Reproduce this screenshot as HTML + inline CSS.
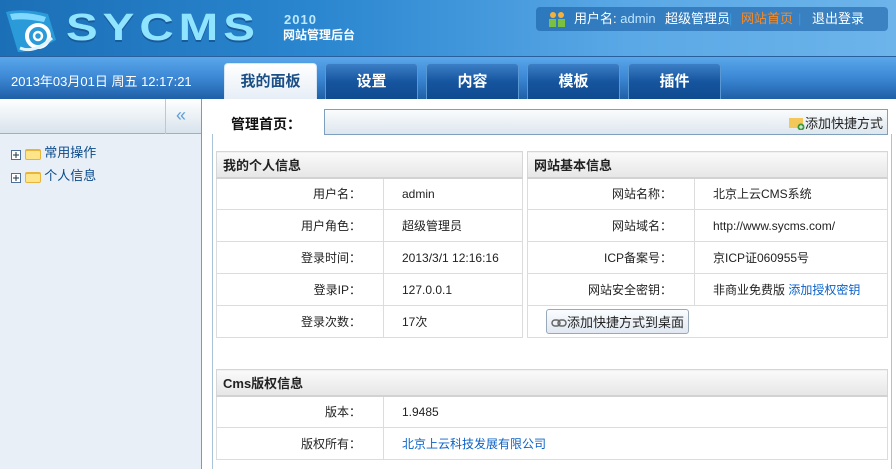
<!DOCTYPE html>
<html><head><meta charset="utf-8"><style>
*{margin:0;padding:0;box-sizing:border-box}
body{width:896px;height:469px;overflow:hidden;font-family:"Liberation Sans","Noto Sans CJK SC",sans-serif;font-size:12px;color:#222;background:#fff;position:relative}
.hd{position:absolute;left:0;top:0;width:896px;height:57px;background:linear-gradient(90deg,#1b6fb6 0%,#2a86cf 35%,#5aa8e6 70%,#6cb4ea 100%);border-bottom:1px solid #2a5f9e}
.logo{position:absolute;left:66px;top:8px;font:bold 38px/40px "Liberation Sans",sans-serif;color:#8fe4ff;letter-spacing:4px;text-shadow:0 2px 0 #1a5a9a;transform:scaleX(1.25);transform-origin:left}
.y2010{position:absolute;left:284px;top:12px;font:bold 13px "Liberation Sans";color:#bfe9ff;letter-spacing:1px}
.sub{position:absolute;left:283px;top:26px;font-weight:bold;font-size:12px;color:#fff}
.ub{position:absolute;left:536px;top:7px;width:352px;height:24px;background:rgba(20,90,160,.55);border-radius:4px;color:#fff;font-size:13px;line-height:24px}
.nav{position:absolute;left:0;top:57px;width:896px;height:42px;background:linear-gradient(#5aa7ea,#3b87d4 50%,#1f5fa6);}
.date{position:absolute;left:11px;top:14px;color:#fff;font-size:13px}
.tab{position:absolute;top:6px;width:93px;height:36px;border-radius:4px 4px 0 0;background:linear-gradient(#3c7fc6,#16559f 50%,#0f4a8f);border:1px solid #5a98d4;border-bottom:0;color:#fff;font-weight:bold;font-size:15px;text-align:center;line-height:36px}
.tab.on{background:linear-gradient(#fff,#e6eef6);color:#1b4f86;border-color:#d7e6f4}
.side{position:absolute;left:0;top:99px;width:202px;height:370px;background:#e8eff7;border-right:1px solid #7a99bb}
.stop{height:35px;background:linear-gradient(#fff,#d8e3ec);border-bottom:1px solid #9ab2c8;position:relative}
.stop i{position:absolute;left:165px;top:0;height:35px;border-left:1px solid #b9c9d8}
.stop b{position:absolute;left:176px;top:6px;color:#5f9fd6;font-size:18px;font-weight:normal;letter-spacing:-4px}
.tree{position:absolute;left:11px;font-size:13px;color:#0a4a8a;line-height:16px}
.tree svg{vertical-align:-3px}
.main{position:absolute;left:212px;top:134px;width:680px;height:335px;border-left:1px solid #a9c3d8;border-right:1px solid #a9c3d8}
.ttl{position:absolute;left:231px;top:114px;font-weight:bold;font-size:14px;color:#111}
.bar{position:absolute;left:324px;top:109px;width:564px;height:26px;border:1px solid #7f9fbf;background:linear-gradient(#fafcfd,#dde6ee)}
.bar span{position:absolute;right:4px;top:3px;font-size:13px}
table{position:absolute;border-collapse:collapse;border:1px solid #d6d6d6;font-size:12px;table-layout:fixed}
td{border:1px solid #dcdcdc;height:32px;padding:0 22px;white-space:nowrap}
th{height:26px;text-align:left;padding-left:6px;font-size:13px;background:linear-gradient(#fafafa,#e6e6e6);border-bottom:2px solid #d2d2d2}
td.l{text-align:right}
a{color:#0a62c8;text-decoration:none}
.btn{display:inline-block;border:1px solid #99a9b9;border-radius:3px;background:linear-gradient(#fbfdff,#e0e8f1);padding:2px 4px;font-size:13px}
</style></head><body>
<div class="hd">
<svg style="position:absolute;left:4px;top:8px" width="54" height="46" viewBox="0 0 54 46"><path d="M2 4 Q20 0 44 6 L52 32 Q30 44 14 44 Z" fill="#2a9ad8"/><path d="M6 6 Q22 3 42 9 L40 14 Q20 10 8 12Z" fill="#7fd8ff"/><circle cx="34" cy="28" r="11" fill="none" stroke="#fff" stroke-width="4"/><circle cx="34" cy="28" r="4" fill="none" stroke="#fff" stroke-width="2.5"/><path d="M16 40 Q30 46 48 30" stroke="#dff4ff" stroke-width="3" fill="none"/></svg>
<div class="logo">SYCMS</div><div class="y2010">2010</div><div class="sub">网站管理后台</div>
<div class="ub"><svg style="position:absolute;left:12px;top:4px" width="18" height="16"><circle cx="5" cy="4" r="3" fill="#f4b23a"/><circle cx="13" cy="4" r="3" fill="#f4b23a"/><rect x="1" y="8" width="7" height="8" fill="#7ac142"/><rect x="10" y="8" width="7" height="8" fill="#7ac142"/></svg>
<span style="position:absolute;left:38px">用户名:<span style="color:#bfe6ff"> admin</span></span>
<span style="position:absolute;left:129px">超级管理员</span><span style="position:absolute;left:193px;color:#3a9ae0">|</span>
<span style="position:absolute;left:205px;color:#ff8a1c">网站首页</span><span style="position:absolute;left:262px;color:#3a9ae0">|</span>
<span style="position:absolute;left:276px">退出登录</span></div>
</div>
<div class="nav"><div class="date">2013年03月01日 周五 12:17:21</div>
<div class="tab on" style="left:224px">我的面板</div><div class="tab" style="left:325px">设置</div><div class="tab" style="left:426px">内容</div><div class="tab" style="left:527px">模板</div><div class="tab" style="left:628px">插件</div></div>
<div class="side"><div class="stop"><i></i><b>«</b></div>
<div class="tree" style="top:46px"><svg width="10" height="10"><rect x=".5" y=".5" width="9" height="9" fill="#fff" stroke="#4a6f9a"/><path d="M2 5H8M5 2V8" stroke="#234"/></svg> <svg width="16" height="12"><rect x="0" y="1" width="16" height="11" rx="2" fill="#e7b43c"/><rect x="1" y="3" width="14" height="8" rx="1" fill="#ffe58a"/></svg> 常用操作</div>
<div class="tree" style="top:69px"><svg width="10" height="10"><rect x=".5" y=".5" width="9" height="9" fill="#fff" stroke="#4a6f9a"/><path d="M2 5H8M5 2V8" stroke="#234"/></svg> <svg width="16" height="12"><rect x="0" y="1" width="16" height="11" rx="2" fill="#e7b43c"/><rect x="1" y="3" width="14" height="8" rx="1" fill="#ffe58a"/></svg> 个人信息</div>
</div>
<div class="main"></div>
<div class="ttl">管理首页：</div>
<div class="bar"><span><svg width="16" height="14" style="vertical-align:-2px"><rect x="0" y="2" width="14" height="10" fill="#f3c75a"/><circle cx="12" cy="11" r="3.5" fill="#3a9a3a"/><path d="M10 11H14M12 9V13" stroke="#fff"/></svg>添加快捷方式</span></div>
<table style="left:216px;top:151px;width:307px"><colgroup><col style="width:167px"><col></colgroup><tr><th colspan="2">我的个人信息</th></tr>
<tr><td class="l">用户名：</td><td style="padding-left:18px">admin</td></tr>
<tr><td class="l">用户角色：</td><td style="padding-left:18px">超级管理员</td></tr>
<tr><td class="l">登录时间：</td><td style="padding-left:18px">2013/3/1 12:16:16</td></tr>
<tr><td class="l">登录IP：</td><td style="padding-left:18px">127.0.0.1</td></tr>
<tr><td class="l">登录次数：</td><td style="padding-left:18px">17次</td></tr></table>
<table style="left:527px;top:151px;width:361px"><colgroup><col style="width:167px"><col></colgroup><tr><th colspan="2">网站基本信息</th></tr>
<tr><td class="l">网站名称：</td><td style="padding-left:18px">北京上云CMS系统</td></tr>
<tr><td class="l">网站域名：</td><td style="padding-left:18px">http://www.sycms.com/</td></tr>
<tr><td class="l">ICP备案号：</td><td style="padding-left:18px">京ICP证060955号</td></tr>
<tr><td class="l">网站安全密钥：</td><td style="padding-left:18px">非商业免费版 <a>添加授权密钥</a></td></tr>
<tr><td colspan="2" style="padding-left:18px"><span class="btn"><svg width="16" height="8"><rect x="1" y="1" width="8" height="6" rx="3" fill="none" stroke="#666" stroke-width="1.5"/><rect x="7" y="1" width="8" height="6" rx="3" fill="none" stroke="#666" stroke-width="1.5"/></svg>添加快捷方式到桌面</span></td></tr></table>
<table style="left:216px;top:369px;width:672px"><colgroup><col style="width:167px"><col></colgroup><tr><th colspan="2">Cms版权信息</th></tr>
<tr><td class="l">版本：</td><td style="padding-left:18px">1.9485</td></tr>
<tr><td class="l">版权所有：</td><td style="padding-left:18px"><a>北京上云科技发展有限公司</a></td></tr></table>
</body></html>
